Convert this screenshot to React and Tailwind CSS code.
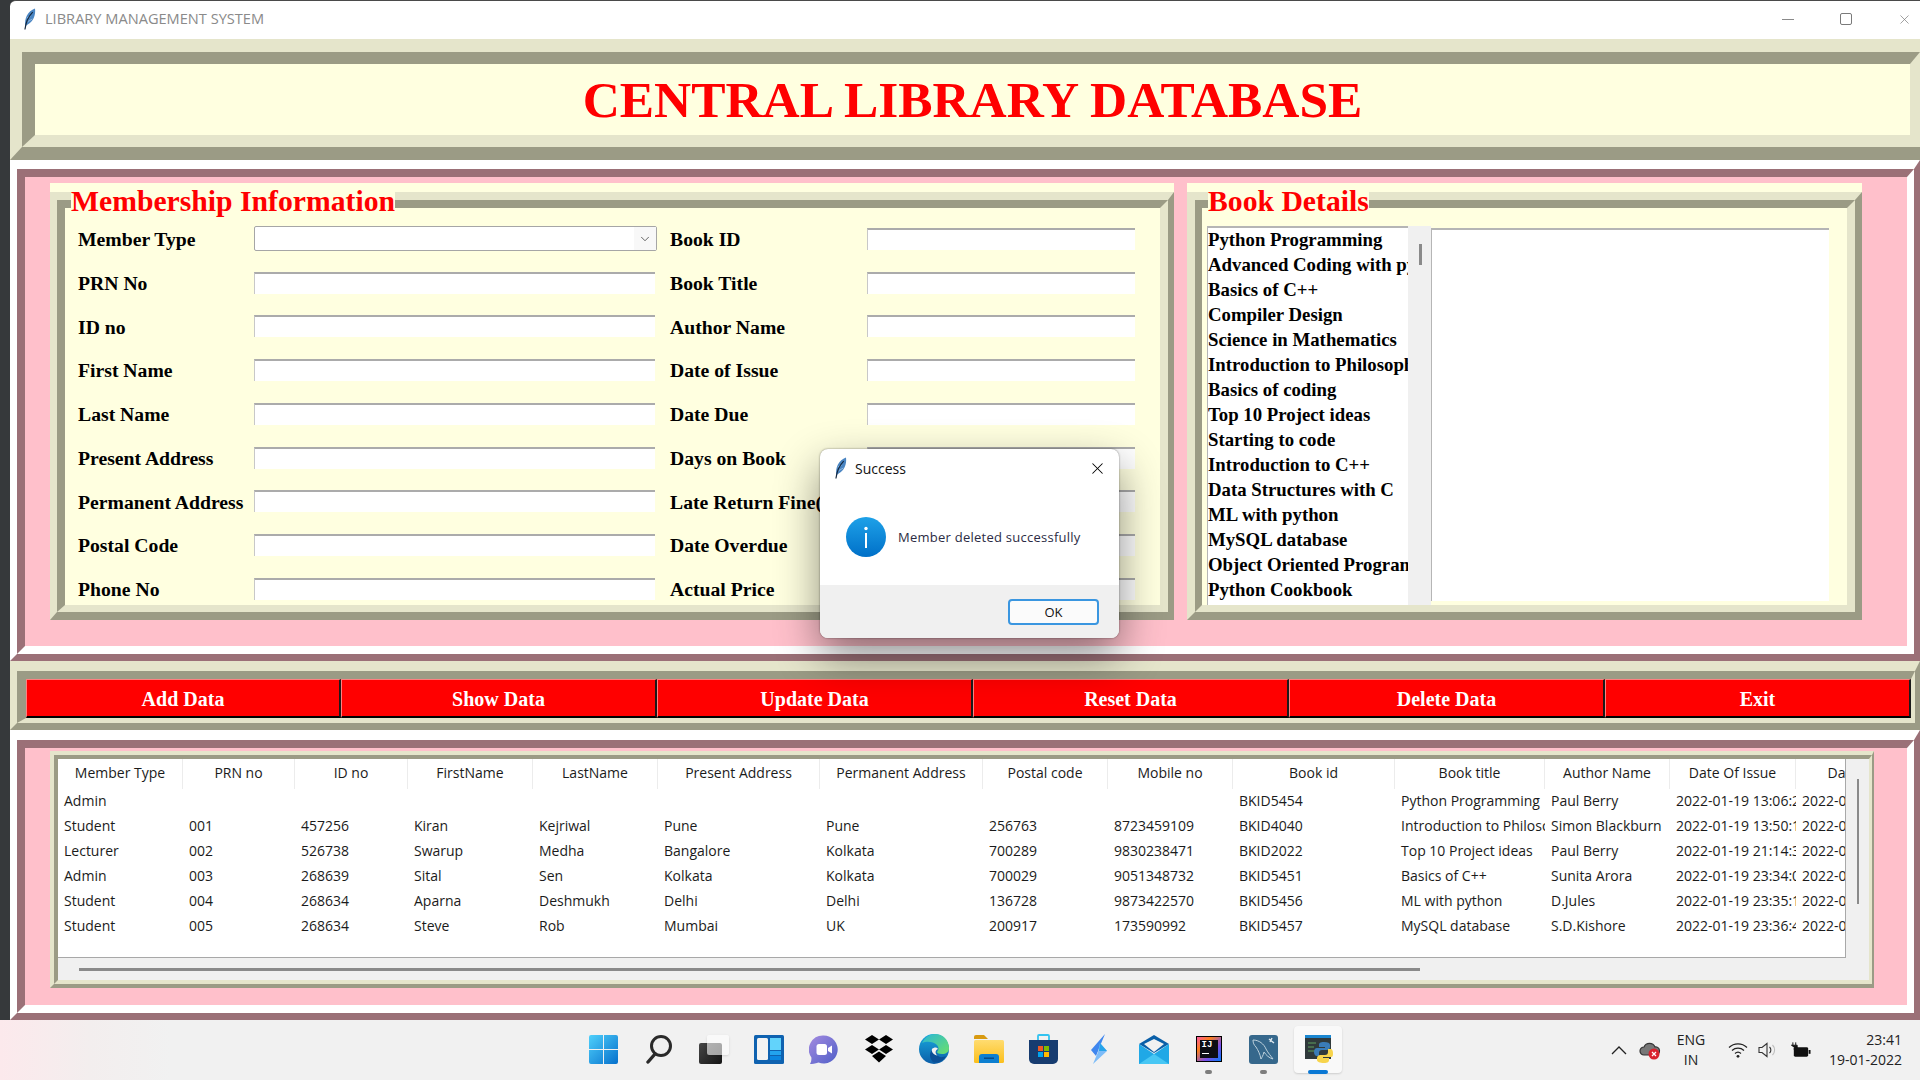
import { ChevronDown, X } from "lucide-react";

const memberRows = [
  ["Member Type", "Book ID"],
  ["PRN No", "Book Title"],
  ["ID no", "Author Name"],
  ["First Name", "Date of Issue"],
  ["Last Name", "Date Due"],
  ["Present Address", "Days on Book"],
  ["Permanent Address", "Late Return Fine("],
  ["Postal Code", "Date Overdue"],
  ["Phone No", "Actual Price"],
];

const bookList = [
  "Python Programming",
  "Advanced Coding with python",
  "Basics of C++",
  "Compiler Design",
  "Science in Mathematics",
  "Introduction to Philosophy",
  "Basics of coding",
  "Top 10 Project ideas",
  "Starting to code",
  "Introduction to C++",
  "Data Structures with C",
  "ML with python",
  "MySQL database",
  "Object Oriented Programming",
  "Python Cookbook",
];

const buttons = [
  ["Add Data", "w-[315px]"],
  ["Show Data", "w-[316px]"],
  ["Update Data", "w-[316px]"],
  ["Reset Data", "w-[316px]"],
  ["Delete Data", "w-[316px]"],
  ["Exit", "flex-1"],
];

const headers = ["Member Type", "PRN no", "ID no", "FirstName", "LastName", "Present Address", "Permanent Address", "Postal code", "Mobile no", "Book id", "Book title", "Author Name", "Date Of Issue", "Date Due"];

const tableRows = [
  ["Admin", "", "", "", "", "", "", "", "", "BKID5454", "Python Programming", "Paul Berry", "2022-01-19 13:06:21", "2022-01-29"],
  ["Student", "001", "457256", "Kiran", "Kejriwal", "Pune", "Pune", "256763", "8723459109", "BKID4040", "Introduction to Philosophy", "Simon Blackburn", "2022-01-19 13:50:12", "2022-01-29"],
  ["Lecturer", "002", "526738", "Swarup", "Medha", "Bangalore", "Kolkata", "700289", "9830238471", "BKID2022", "Top 10 Project ideas", "Paul Berry", "2022-01-19 21:14:33", "2022-01-29"],
  ["Admin", "003", "268639", "Sital", "Sen", "Kolkata", "Kolkata", "700029", "9051348732", "BKID5451", "Basics of C++", "Sunita Arora", "2022-01-19 23:34:05", "2022-01-29"],
  ["Student", "004", "268634", "Aparna", "Deshmukh", "Delhi", "Delhi", "136728", "9873422570", "BKID5456", "ML with python", "D.Jules", "2022-01-19 23:35:18", "2022-01-29"],
  ["Student", "005", "268634", "Steve", "Rob", "Mumbai", "UK", "200917", "173590992", "BKID5457", "MySQL database", "S.D.Kishore", "2022-01-19 23:36:40", "2022-01-29"],
];

const gridCols = "grid grid-cols-[125px_112px_113px_125px_125px_162px_163px_125px_125px_162px_150px_125px_126px_125px]";

const Feather = ({ className }) => (
  <svg viewBox="0 0 14 24" className={className}>
    <path d="M2.5 20 C1 12 5 3 13 0.5 C14 8 11 15 5 18 Z" fill="#4a85c2" />
    <path d="M4 11 L8 9 M5 15 L10 12" stroke="#a9c8e6" strokeWidth="0.8" />
    <path d="M2 23.5 C3 15 6 9 10.5 4.5" stroke="#14263c" strokeWidth="1.3" fill="none" />
  </svg>
);

const MemberField = ({ combo }) =>
  combo ? (
    <div className="flex justify-end items-stretch w-[403px] h-[25px] -mt-[2px] bg-white border border-[#a6a6a6] rounded-[2px]">
      <div className="w-[22px] bg-[#f8f8f8] flex items-center justify-center">
        <ChevronDown size={14} strokeWidth={1.4} className="text-[#444]" />
      </div>
    </div>
  ) : (
    <div className="w-[401px] h-[22px] -mt-[2px] bg-white border-t-2 border-l border-t-[#ababab] border-l-[#c8c8c8]" />
  );

const FrameLabel = ({ children }) => (
  <div className="absolute left-[21px] top-[2px] bg-[#ffffe0] text-[#ff0000] font-bold text-[29.7px] leading-[32px] whitespace-nowrap font-['Liberation_Serif',serif]">
    {children}
  </div>
);

const WindowsIcon = () => (
  <svg viewBox="0 0 29 29" className="w-[29px] h-[29px]">
    <defs>
      <linearGradient id="win" x1="0" y1="0" x2="1" y2="1">
        <stop offset="0" stopColor="#4fd0fb" />
        <stop offset="1" stopColor="#0670cc" />
      </linearGradient>
    </defs>
    <path d="M2 0H14V14H0V2a2 2 0 0 1 2-2zM15 0H27a2 2 0 0 1 2 2V14H15zM0 15H14V29H2a2 2 0 0 1-2-2zM15 15H29V27a2 2 0 0 1-2 2H15z" fill="url(#win)" />
  </svg>
);

const SearchIcon = () => (
  <svg viewBox="0 0 28 30" className="w-[28px] h-[30px]">
    <circle cx="16" cy="12" r="9.5" fill="none" stroke="#2a2a2a" strokeWidth="3" />
    <path d="M10 20 L3 28" stroke="#2a2a2a" strokeWidth="3.4" strokeLinecap="round" />
  </svg>
);

const TaskViewIcon = () => (
  <div className="relative w-[30px] h-[29px]">
    <div className="absolute left-0 bottom-0 w-[23px] h-[21px] rounded-[2px] bg-[linear-gradient(135deg,#474747,#141414)]" />
    <div className="absolute right-0 top-0 w-[22px] h-[20px] rounded-[2px] bg-white/60 shadow-sm" />
  </div>
);

const WidgetsIcon = () => (
  <svg viewBox="0 0 30 29" className="w-[30px] h-[29px]">
    <rect width="30" height="29" rx="1.5" fill="#0f62b0" />
    <rect x="3" y="3" width="11" height="22" rx="1.5" fill="#f3f3f3" />
    <rect x="16" y="3" width="11" height="12" fill="#62d3fb" />
    <rect x="16" y="16" width="11" height="4" fill="#22a3ee" />
    <rect x="16" y="21" width="11" height="4" fill="#0b86e0" />
  </svg>
);

const ChatIcon = () => (
  <svg viewBox="0 0 29 29" className="w-[29px] h-[29px]">
    <defs>
      <linearGradient id="chat" x1="0" y1="0" x2="1" y2="1">
        <stop offset="0" stopColor="#a48be0" />
        <stop offset="1" stopColor="#4f5fc8" />
      </linearGradient>
    </defs>
    <path d="M14.5 0.5a14 14 0 1 1 -5 27 C6 28.5 3 29 1 29 C2 27 2.6 25 2.4 22.5 A14 14 0 0 1 14.5 0.5z" fill="url(#chat)" />
    <rect x="7.5" y="9" width="10.5" height="11" rx="2.5" fill="#fff" />
    <path d="M19 13 L23 10.5 V18.5 L19 16z" fill="#fff" />
  </svg>
);

const DropboxIcon = () => (
  <svg viewBox="0 0 30 28" className="w-[30px] h-[28px]">
    <path d="M8 0 L15 4.5 L8 9 L1 4.5z M22 0 L29 4.5 L22 9 L15 4.5z M8 10 L15 14.5 L8 19 L1 14.5z M22 10 L29 14.5 L22 19 L15 14.5z M15 16.5 L22 21 L15 27.5 L8 21z" fill="#000" />
  </svg>
);

const EdgeIcon = () => (
  <svg viewBox="0 0 30 30" className="w-[30px] h-[30px]">
    <defs>
      <linearGradient id="edgeA" x1="0" y1="0" x2="0" y2="1">
        <stop offset="0" stopColor="#19a8de" />
        <stop offset="1" stopColor="#0b5ea8" />
      </linearGradient>
      <linearGradient id="edgeB" x1="0" y1="0" x2="1" y2="1">
        <stop offset="0" stopColor="#2ab7d8" />
        <stop offset="1" stopColor="#6be06a" />
      </linearGradient>
    </defs>
    <circle cx="15" cy="15" r="15" fill="url(#edgeA)" />
    <path d="M3 9 C6 3 11 0 16 0 C24 0 30 6 30 14 C30 18 27 20 23 20 C20 20 18 19 18 18 C20 16 20 13 18 11 C14 7 7 7 3 9z" fill="url(#edgeB)" />
    <path d="M14 28 C10 24 10 18 14 15.5 C16 14 18 14 19 15 C16 16 16 20 19 22 C22 24 25 23 27 22 C25 26 20 30 14 28z" fill="#0a4f96" />
    <path d="M13 15 C15 13 18 13 19 15 C16 16 16 20 18.5 21.5 C15 21 12 18 13 15z" fill="#f1f1f1" />
  </svg>
);

const FolderIcon = () => (
  <svg viewBox="0 0 30 28" className="w-[30px] h-[28px]">
    <path d="M0 2a2 2 0 0 1 2-2h8l4 4h-14z" fill="#d89a10" />
    <rect y="5" width="30" height="23" rx="1.5" fill="url(#fold)" />
    <defs>
      <linearGradient id="fold" x1="0" y1="0" x2="0" y2="1">
        <stop offset="0" stopColor="#ffdc70" />
        <stop offset="1" stopColor="#fbbf1c" />
      </linearGradient>
    </defs>
    <path d="M5 28 V22 a3 3 0 0 1 3-3 H22 a3 3 0 0 1 3 3 V28z" fill="#0c7fd0" />
    <rect x="10" y="22.5" width="10" height="1.4" fill="#07467f" />
  </svg>
);

const StoreIcon = () => (
  <svg viewBox="0 0 29 30" className="w-[29px] h-[30px]">
    <path d="M9 6 V2 a1 1 0 0 1 1-1 H19 a1 1 0 0 1 1 1 V6" fill="none" stroke="#33c3f0" strokeWidth="1.8" />
    <path d="M0 6 H29 V25 a5 5 0 0 1-5 5 H5 a5 5 0 0 1-5-5z" fill="#173c70" />
    <rect x="9" y="12" width="5" height="5" fill="#ef5a24" />
    <rect x="15" y="12" width="5" height="5" fill="#7fba00" />
    <rect x="9" y="18" width="5" height="5" fill="#00a4ef" />
    <rect x="15" y="18" width="5" height="5" fill="#ffb900" />
  </svg>
);

const BoltIcon = () => (
  <svg viewBox="0 0 16 30" className="w-[16px] h-[30px]">
    <path d="M14 0 L0 16 L5 22 L9 12z" fill="#3f86ee" />
    <path d="M9 9 L16 17 L2 30 L7 18z" fill="#7dbcf8" />
    <path d="M9 9 L16 17 L8 17z" fill="#27a4ea" />
  </svg>
);

const MailIcon = () => (
  <svg viewBox="0 0 30 29" className="w-[30px] h-[29px]">
    <path d="M0 9 L15 0 L30 9 L15 18z" fill="#0a5fa8" />
    <path d="M5 9 L15 4 L25 9 L15 17z" fill="#f1f1f1" />
    <path d="M0 9 L15 19 L30 9 V29 H0z" fill="#20a8e6" />
    <path d="M0 29 L15 19 L30 29z" fill="#48c7f4" />
  </svg>
);

const IntellijIcon = () => (
  <div className="w-[26px] h-[26px] p-[3px] bg-[linear-gradient(135deg,#ff5a9f,#fc801d_30%,#7d50e8_65%,#087cfa)] border border-black">
    <div className="w-full h-full bg-[#0d0d14] flex flex-col pl-[2px] text-white font-bold text-[9px] leading-[11px] font-['Liberation_Mono',monospace]">
      IJ
      <div className="w-[7px] h-[1px] bg-white mt-[2px]" />
    </div>
  </div>
);

const WorkbenchIcon = () => (
  <svg viewBox="0 0 29 29" className="w-[29px] h-[29px]">
    <rect width="29" height="29" rx="3" fill="#36688c" />
    <path d="M4 5 C10 5 15 9 17 14 C19 18 22 21 24 24 C20 23 17 20 15 17 C14 21 13 22 12 24 C11 19 9 15 7 12 C5 10 4 8 4 5z" fill="none" stroke="#bcd0dc" strokeWidth="1" />
    <path d="M20 4 L25 8 M23 3 L21 7" stroke="#dfe8ee" strokeWidth="1.4" />
  </svg>
);

const PythonIcon = () => (
  <svg viewBox="0 0 28 28" className="w-[28px] h-[28px]">
    <rect width="26" height="24" fill="#303a3c" />
    <rect width="26" height="3" fill="#1a86d0" />
    <path d="M3 8h8M3 12h6M3 16h9" stroke="#5fa05f" strokeWidth="1" />
    <path d="M19 7 c-4 0-5 1-5 3v2h6v1h-8c-2 0-3 2-3 4s1 4 3 4h2v-3c0-2 1-3 3-3h5c1 0 3-1 3-3v-2c0-2-2-3-6-3z" fill="#3a7cb8" />
    <path d="M19 28 c4 0 5-1 5-3v-2h-6v-1h8c2 0 2-2 2-4s-1-4-2-4h-3v3c0 2-1 3-3 3h-5c-1 0-3 1-3 3v2c0 2 3 3 7 3z" fill="#f7d44c" />
  </svg>
);

const apps = [
  [WindowsIcon, ""],
  [SearchIcon, ""],
  [TaskViewIcon, ""],
  [WidgetsIcon, ""],
  [ChatIcon, ""],
  [DropboxIcon, ""],
  [EdgeIcon, ""],
  [FolderIcon, ""],
  [StoreIcon, ""],
  [BoltIcon, ""],
  [MailIcon, ""],
  [IntellijIcon, "dot"],
  [WorkbenchIcon, "dot"],
  [PythonIcon, "active"],
];

const Taskbar = () => (
  <div className="h-[60px] flex items-center pl-[576px] bg-[linear-gradient(90deg,#fce9ec_0,#f3eeee_90px,#f1f1f1_170px)] font-['Open_Sans',sans-serif] text-[#222]">
    {apps.map(([Icon, state], i) => (
      <div key={i} className="relative w-[55px] h-[60px] flex items-center justify-center pb-[2px]">
        {state === "active" && (
          <div className="absolute left-[3px] top-[6px] w-[48px] h-[47px] rounded-[4px] bg-[#f9f9f9] shadow-[0_1px_2px_rgba(0,0,0,0.15)]" />
        )}
        <div className="relative"><Icon /></div>
        {state === "dot" && <div className="absolute left-[24px] top-[50px] w-[7px] h-[4px] rounded-full bg-[#7d7d7d]" />}
        {state === "active" && <div className="absolute left-[17px] top-[50px] w-[20px] h-[4px] rounded-full bg-[#0a78d4]" />}
      </div>
    ))}
    <div className="flex items-center ml-[-2px] pl-[267px]">
      <svg viewBox="0 0 16 10" className="w-[16px] h-[10px]">
        <path d="M1 9 L8 2 L15 9" fill="none" stroke="#222" strokeWidth="1.3" />
      </svg>
      <svg viewBox="0 0 22 20" className="w-[22px] h-[20px] ml-[12px]">
        <path d="M5 15 a4 4 0 0 1 0-8 a6 6 0 0 1 11 0 a4 4 0 0 1 1 8z" fill="#777" stroke="#333" strokeWidth="1.2" />
        <circle cx="15" cy="14" r="5.5" fill="#d9232e" />
        <path d="M13 12 L17 16 M17 12 L13 16" stroke="#fff" strokeWidth="1.2" />
      </svg>
      <div className="ml-[15px] w-[30px] text-center text-[14px] leading-[20px]">
        <div>ENG</div>
        <div>IN</div>
      </div>
      <svg viewBox="0 0 20 16" className="w-[20px] h-[16px] ml-[22px]">
        <path d="M1 5.5 a13 13 0 0 1 18 0 M4 8.5 a9 9 0 0 1 12 0 M7 11.5 a4.5 4.5 0 0 1 6 0" fill="none" stroke="#222" strokeWidth="1.2" />
        <circle cx="10" cy="14.3" r="1.4" fill="#222" />
      </svg>
      <svg viewBox="0 0 20 16" className="w-[20px] h-[16px] ml-[10px]">
        <path d="M1 5.5 H4 L9 1.5 V14.5 L4 10.5 H1z" fill="none" stroke="#333" strokeWidth="1.1" />
        <path d="M11.5 5 a4 4 0 0 1 0 6" fill="none" stroke="#333" strokeWidth="1.1" />
        <path d="M14.5 3 a7 7 0 0 1 0 10" fill="none" stroke="#bdbdbd" strokeWidth="1.1" />
      </svg>
      <svg viewBox="0 0 22 16" className="w-[21px] h-[16px] ml-[12px]">
        <path d="M3 0 V3 M6 0 V3 M1.5 3 H7.5 V6 L4.5 8 V5z" fill="#111" stroke="#111" strokeWidth="1" />
        <rect x="4" y="5" width="15" height="10" rx="1.5" fill="#111" />
        <rect x="19.5" y="8" width="2" height="4" fill="#111" />
      </svg>
      <div className="ml-[17px] w-[74px] text-right text-[14px] leading-[20px] whitespace-nowrap">
        <div>23:41</div>
        <div>19-01-2022</div>
      </div>
    </div>
  </div>
);

const MemberFrame = () => (
  <div className="relative w-[1124px] h-[437px] pt-[9px] bg-[#ffffe0]">
    <div className="h-full border-t-8 border-l-[7px] border-b-8 border-r-[6px] border-t-[#e5e5cb] border-l-[#e5e5cb] border-b-[#9b9b85] border-r-[#9b9b85]">
      <div className="h-full bg-[#ffffe0] border-t-8 border-l-8 border-b-[7px] border-r-8 border-t-[#9b9b85] border-l-[#9b9b85] border-b-[#e5e5cb] border-r-[#e5e5cb] overflow-hidden pt-[10px] pl-[13px]">
        {memberRows.map(([left, right], i) => (
          <div key={left} className="flex items-center h-[43.75px] text-[19.7px] text-black font-bold font-['Liberation_Serif',serif] whitespace-nowrap">
            <div className="w-[176px]">{left}</div>
            <MemberField combo={i === 0} />
            <div className={i === 0 ? "w-[210px] pl-[13px]" : "w-[212px] pl-[15px]"}>{right}</div>
            <div className="w-[268px] h-[22px] -mt-[2px] bg-white border-t-2 border-l border-t-[#ababab] border-l-[#c8c8c8]" />
          </div>
        ))}
      </div>
    </div>
    <FrameLabel>Membership Information</FrameLabel>
  </div>
);

const BookFrame = () => (
  <div className="relative w-[675px] h-[437px] pt-[9px] bg-[#ffffe0] ml-[13px]">
    <div className="h-full border-t-8 border-l-8 border-b-8 border-r-[7px] border-t-[#e5e5cb] border-l-[#e5e5cb] border-b-[#9b9b85] border-r-[#9b9b85]">
      <div className="h-full flex bg-[#ffffe0] border-t-8 border-l-[7px] border-b-[7px] border-r-8 border-t-[#9b9b85] border-l-[#9b9b85] border-b-[#e5e5cb] border-r-[#e5e5cb] pt-[18px] pl-[5px]">
        <div className="w-[201px] h-[379px] bg-white border-t-2 border-l border-t-[#b5b5b5] border-l-[#b5b5b5] overflow-hidden text-[18.8px] leading-[24px] text-black font-bold font-['Liberation_Serif',serif] whitespace-nowrap">
          {bookList.map((b) => (
            <div key={b} className="h-[25px]">{b}</div>
          ))}
        </div>
        <div className="w-[23px] h-[379px] bg-[#f0f0f0] pt-[18px] pl-[11px]">
          <div className="w-[3px] h-[21px] bg-[#8a8a8a]" />
        </div>
        <div className="w-[398px] h-[373px] mt-[2px] bg-white border-t-2 border-l border-t-[#b5b5b5] border-l-[#b5b5b5]" />
      </div>
    </div>
    <FrameLabel>Book Details</FrameLabel>
  </div>
);

const DataTable = () => (
  <div className="h-[237px] border-t-4 border-l-4 border-b-4 border-r-[2px] border-t-[#e5e5cb] border-l-[#e5e5cb] border-b-[#9b9b85] border-r-[#9b9b85]">
    <div className="h-full bg-[#f0f0f0] border-t-4 border-l-4 border-b-4 border-r-[3px] border-t-[#9b9b85] border-l-[#9b9b85] border-b-[#e5e5cb] border-r-[#e5e5cb] font-['Open_Sans',sans-serif] text-[14px] text-[#1b1b1b]">
      <div className="flex h-[199px]">
        <div className="w-[1788px] h-full bg-white overflow-hidden border-b border-[#a8a8a8] border-r">
          <div className={gridCols + " w-[1913px] h-[30px] items-center"}>
            {headers.map((h) => (
              <div key={h} className="h-[30px] leading-[28px] text-center border-r border-[#ececec] whitespace-nowrap overflow-hidden">{h}</div>
            ))}
          </div>
          {tableRows.map((row, i) => (
            <div key={i} className={gridCols + " w-[1913px] h-[25px]"}>
              {row.map((c, j) => (
                <div key={j} className="pl-[6px] pr-[7px] leading-[24px] whitespace-nowrap overflow-hidden">{c}</div>
              ))}
            </div>
          ))}
        </div>
        <div className="flex-1 pt-[20px] pl-[11px]">
          <div className="w-[2px] h-[125px] bg-[#8a8a8a]" />
        </div>
      </div>
      <div className="pt-[10px] pl-[21px]">
        <div className="w-[1341px] h-[3px] bg-[#8a8a8a]" />
      </div>
    </div>
  </div>
);

const SuccessDialog = () => (
  <div className="absolute left-[820px] top-[449px] w-[299px] h-[189px] flex flex-col rounded-[8px] overflow-hidden bg-white shadow-[0_18px_44px_rgba(0,0,0,0.45),0_0_2px_rgba(0,0,0,0.5)] font-['Open_Sans',sans-serif] text-[#111]">
    <div className="flex items-center h-[38px] pl-[14px] pr-[12px]">
      <Feather className="w-[13px] h-[22px]" />
      <div className="ml-[8px] text-[14px]">Success</div>
      <X size={19} strokeWidth={1.3} className="ml-auto text-black" />
    </div>
    <div className="flex items-center h-[98px] pl-[26px] pt-[2px]">
      <svg viewBox="0 0 40 40" className="w-[40px] h-[40px]">
        <defs>
          <linearGradient id="info" x1="0" y1="0" x2="0" y2="1">
            <stop offset="0" stopColor="#1ea1e8" />
            <stop offset="1" stopColor="#0070c8" />
          </linearGradient>
        </defs>
        <circle cx="20" cy="20" r="20" fill="url(#info)" />
        <circle cx="20" cy="11.5" r="1.7" fill="#fff" />
        <rect x="19" y="16" width="2" height="15" fill="#fff" />
      </svg>
      <div className="ml-[12px] mt-[1px] text-[13px] tracking-[0.25px] text-[#2b2b44] whitespace-nowrap">Member deleted successfully</div>
    </div>
    <div className="flex-1 bg-[#f0f0f0] flex items-start justify-end pt-[14px] pr-[20px]">
      <div className="w-[91px] h-[26px] rounded-[4px] border-2 border-[#3a96e0] bg-[#fbfbfb] text-center text-[13px] leading-[22px]">OK</div>
    </div>
  </div>
);

const App = () => {
  return (
    <div className="relative w-[1920px] h-[1080px] overflow-hidden flex flex-col bg-[#36393b]">
      <div className="flex flex-1 pl-[10px]">
        <div className="flex-1 flex flex-col min-w-0">
          <div className="h-[39px] flex items-center bg-white border-t border-[#4a4a4a] rounded-tl-[6px] relative pb-[2px]">
            <Feather className="ml-[13px] w-[13px] h-[22px]" />
            <div className="ml-[9px] text-[14.6px] text-[#8a8a8a] font-['Open_Sans',sans-serif]">LIBRARY MANAGEMENT SYSTEM</div>
            <div className="ml-auto flex items-center pr-[8px]">
              <div className="w-[12px] h-[1px] bg-[#8a8a8a]" />
              <div className="ml-[46px] w-[12px] h-[12px] border border-[#7a7a7a] rounded-[2px]" />
              <X size={15} strokeWidth={1.1} className="ml-[45px] text-[#777]" />
            </div>
          </div>

          <div className="h-[121px] border-t-[13px] border-l-[12px] border-b-[13px] border-t-[#e5e5cb] border-l-[#e5e5cb] border-b-[#9b9b85]">
            <div className="h-full flex items-center justify-center bg-[#ffffe0] border-t-[12px] border-l-[13px] border-b-[12px] border-r-10 border-t-[#9b9b85] border-l-[#9b9b85] border-b-[#e5e5cb] border-r-[#e5e5cb] text-[#ff0000] font-bold text-[51.4px] font-['Liberation_Serif',serif]">
              CENTRAL LIBRARY DATABASE
            </div>
          </div>

          <div className="h-[501px] border-t-[9px] border-l-[7px] border-b-[7px] border-r-[6px] border-t-white border-l-white border-b-[#9b7077] border-r-[#9b7077]">
            <div className="h-full flex bg-[#ffc0cb] border-t-8 border-l-8 border-b-8 border-r-[7px] border-t-[#9b7077] border-l-[#9b7077] border-b-white border-r-white pt-[6px] pl-[25px]">
              <MemberFrame />
              <BookFrame />
            </div>
          </div>

          <div className="h-[69px] border-t-[10px] border-l-[7px] border-b-[7px] border-r-[5px] border-t-[#e5e5cb] border-l-[#e5e5cb] border-b-[#9b9b85] border-r-[#9b9b85]">
            <div className="h-full flex bg-[#ffffe0] border-t-[8px] border-l-[9px] border-b-[5px] border-r-[4px] border-t-[#9b9b85] border-l-[#9b9b85] border-b-[#e5e5cb] border-r-[#e5e5cb]">
              {buttons.map(([label, width]) => (
                <div key={label} className={width + " h-full flex items-center justify-center pt-[2px] bg-[#ff0000] border-t border-l border-b-2 border-r-2 border-t-[#ff8080] border-l-[#ff8080] border-b-black border-r-[#1a1a1a] text-white font-bold text-[20px] font-['Liberation_Serif',serif]"}>
                  {label}
                </div>
              ))}
            </div>
          </div>

          <div className="h-[290px] border-t-[10px] border-l-[7px] border-b-[7px] border-r-[6px] border-t-white border-l-white border-b-[#9b7077] border-r-[#9b7077]">
            <div className="h-full bg-[#ffc0cb] border-t-8 border-l-8 border-b-8 border-r-[7px] border-t-[#9b7077] border-l-[#9b7077] border-b-white border-r-white pt-[3px] pl-[25px] pr-[33px]">
              <DataTable />
            </div>
          </div>
        </div>
      </div>
      <Taskbar />
      <SuccessDialog />
    </div>
  );
};

export default App;
